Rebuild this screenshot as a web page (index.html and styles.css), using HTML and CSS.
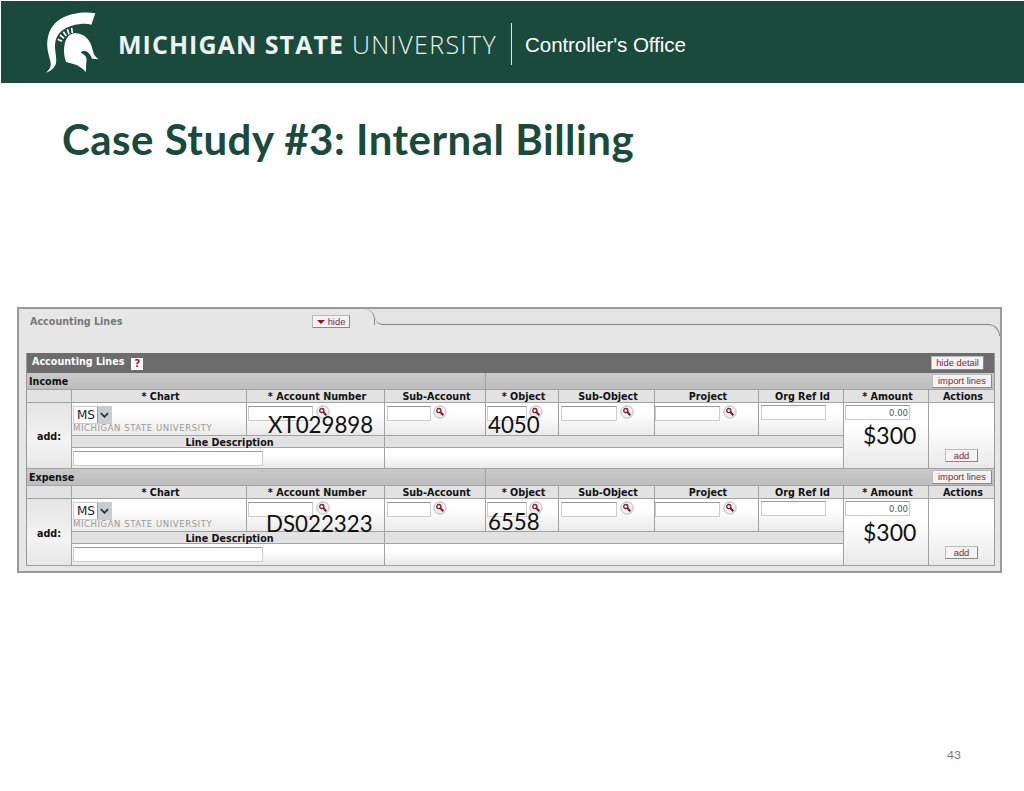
FILE: index.html
```html
<!DOCTYPE html>
<html lang="en">
<head>
<meta charset="utf-8">
<title>Case Study #3: Internal Billing</title>
<link rel="stylesheet" href="styles.css">
</head>
<body>
<svg class="defs" width="0" height="0" aria-hidden="true">
  <symbol id="mag" viewBox="0 0 14 14">
    <circle cx="7" cy="7" r="6.2" fill="#eee" stroke="#bbb" stroke-width="1"/>
    <circle cx="5.8" cy="5.6" r="2.1" fill="#fff" stroke="#7a1c2e" stroke-width="1.3"/>
    <path d="M7.4 7.2 10.4 10.2" stroke="#7a1c2e" stroke-width="2"/>
  </symbol>
</svg>
<div class="page">
  <header class="banner">
    <svg class="spartan" viewBox="45 3 180 246" aria-hidden="true">
      <path fill="#fff" d="M196 40C160 34 112 40 82 64C58 84 50 112 52 142C54 166 64 184 62 198C60 206 54 212 48 218C62 214 74 204 78 190C82 172 72 150 76 126C80 102 100 84 130 76C150 71 170 70 184 74Z"/>
      <path fill="none" stroke="#fff" stroke-width="5" d="M83 118 96 124M90 105 102 115M100 95 109 108M112 88 117 103M125 84 127 99"/>
      <path fill="#fff" d="M132 100C160 98 182 118 188 150C190 162 196 172 206 178L186 176C182 166 176 156 168 154C160 152 154 154 152 158C162 162 170 170 170 178C168 192 168 204 168 216C158 206 146 196 130 192L108 186C102 170 100 150 104 132C108 114 118 102 132 100Z"/>
    </svg>
    <div class="wordmark"><b>MICHIGAN STATE</b> UNIVERSITY</div>
    <div class="sep"></div>
    <div class="office">Controller's Office</div>
  </header>

  <h1 class="title">Case Study #3: Internal Billing</h1>

  <section class="panel">
    <div class="tabstrip">
      <div class="tab">
        <span class="tab-title">Accounting Lines</span>
        <button class="btn btn-hide"><span class="tri"></span>hide</button>
      </div>
      <div class="tab-rest"></div>
    </div>
    <div class="panel-body">
      <div class="panel-corner"></div>
      <div class="table">
        <div class="table-head">
          <span>Accounting Lines</span>
          <span class="help">?</span>
          <button class="btn btn-detail">hide detail</button>
        </div>

        <div class="lines">
          <div class="c group g-left">Income</div>
          <div class="c group g-right"><button class="btn">import lines</button></div>
          <div class="c th"></div>
          <div class="c th">* Chart</div>
          <div class="c th">* Account Number</div>
          <div class="c th">Sub-Account</div>
          <div class="c th">* Object</div>
          <div class="c th">Sub-Object</div>
          <div class="c th">Project</div>
          <div class="c th">Org Ref Id</div>
          <div class="c th">* Amount</div>
          <div class="c th th-end">Actions</div>
          <div class="c add">add:</div>
          <div class="c td chart">
            <div class="sel"><span class="sel-v">MS</span><span class="sel-b"><svg viewBox="0 0 10 6" width="9" height="6"><path d="M1 1 5 5 9 1" fill="none" stroke="#333" stroke-width="2"/></svg></span></div>
            <div class="chart-name">MICHIGAN STATE UNIVERSITY</div>
          </div>
          <div class="c td acct"><input class="in w65"><svg class="mag"><use href="#mag"/></svg><span class="over o-acct1">XT029898</span></div>
          <div class="c td sub"><input class="in w44"><svg class="mag"><use href="#mag"/></svg></div>
          <div class="c td obj"><input class="in w40"><svg class="mag"><use href="#mag"/></svg><span class="over o-obj1">4050</span></div>
          <div class="c td sobj"><input class="in w56"><svg class="mag"><use href="#mag"/></svg></div>
          <div class="c td proj"><input class="in w65"><svg class="mag"><use href="#mag"/></svg></div>
          <div class="c td org"><input class="in w65"></div>
          <div class="c td amt"><input class="in w65 money" value="0.00"><span class="over o-amt1">$300</span></div>
          <div class="c td act"><button class="btn btn-add">add</button></div>
          <div class="c th desc-h">Line Description</div>
          <div class="c th desc-fill"></div>
          <div class="c td desc"><input class="in w190"></div>
          <div class="c td desc-blank"></div>
        </div>

        <div class="lines">
          <div class="c group g-left">Expense</div>
          <div class="c group g-right"><button class="btn">import lines</button></div>
          <div class="c th"></div>
          <div class="c th">* Chart</div>
          <div class="c th">* Account Number</div>
          <div class="c th">Sub-Account</div>
          <div class="c th">* Object</div>
          <div class="c th">Sub-Object</div>
          <div class="c th">Project</div>
          <div class="c th">Org Ref Id</div>
          <div class="c th">* Amount</div>
          <div class="c th th-end">Actions</div>
          <div class="c add">add:</div>
          <div class="c td chart">
            <div class="sel"><span class="sel-v">MS</span><span class="sel-b"><svg viewBox="0 0 10 6" width="9" height="6"><path d="M1 1 5 5 9 1" fill="none" stroke="#333" stroke-width="2"/></svg></span></div>
            <div class="chart-name">MICHIGAN STATE UNIVERSITY</div>
          </div>
          <div class="c td acct"><input class="in w65"><svg class="mag"><use href="#mag"/></svg><span class="over o-acct2">DS022323</span></div>
          <div class="c td sub"><input class="in w44"><svg class="mag"><use href="#mag"/></svg></div>
          <div class="c td obj"><input class="in w40"><svg class="mag"><use href="#mag"/></svg><span class="over o-obj2">6558</span></div>
          <div class="c td sobj"><input class="in w56"><svg class="mag"><use href="#mag"/></svg></div>
          <div class="c td proj"><input class="in w65"><svg class="mag"><use href="#mag"/></svg></div>
          <div class="c td org"><input class="in w65"></div>
          <div class="c td amt"><input class="in w65 money" value="0.00"><span class="over o-amt2">$300</span></div>
          <div class="c td act"><button class="btn btn-add">add</button></div>
          <div class="c th desc-h">Line Description</div>
          <div class="c th desc-fill"></div>
          <div class="c td desc"><input class="in w190"></div>
          <div class="c td desc-blank"></div>
        </div>
      </div>
    </div>
  </section>

  <footer class="pagenum">43</footer>
</div>
</body>
</html>
```
FILE: styles.css
```css
* { box-sizing: border-box; }
html, body { margin: 0; padding: 0; background: #fff; }
.defs { position: absolute; }
.page {
  width: 1024px;
  height: 791px;
  overflow: hidden;
  display: flex;
  flex-direction: column;
}

/* banner */
.banner {
  height: 82px;
  margin: 1px 0 0 1px;
  background: #1a4a3c;
  color: #fff;
  display: flex;
  align-items: center;
  padding-left: 44px;
  flex: none;
}
.spartan { width: 60px; height: 82px; flex: none; }
.wordmark {
  margin-left: 13px;
  font: 300 25px "Open Sans", sans-serif;
  color: #eef2f0;
  white-space: nowrap;
  width: 380px;
  margin-top: 4px;
  letter-spacing: 1.35px;
}
.wordmark b { font-weight: 700; letter-spacing: 1.05px; }
.sep { width: 1px; height: 42px; margin: 4px 13px 0; background: #dfe6e3; flex: none; }
.office {
  font: 400 20.6px "Liberation Sans", sans-serif;
  margin-top: 6px;
  letter-spacing: -0.1px;
  white-space: nowrap;
}

/* title */
.title {
  margin: 33px 0 0 62px;
  font: 700 42px/46px Lato, sans-serif;
  color: #1a4a3c;
  letter-spacing: 0.5px;
  flex: none;
}

/* screenshot panel */
.panel {
  width: 985px;
  height: 266px;
  margin: 145px 0 0 17px;
  border: 2px solid #9a9a9a;
  background: #e4e4e4;
  display: flex;
  flex-direction: column;
  flex: none;
  font-family: "DejaVu Sans", sans-serif;
}
.tabstrip { display: flex; height: 16px; flex: none; }
.tab {
  position: relative;
  z-index: 1;
  width: 356px;
  height: 16px;
  background: #e6e6e6;
  border-top-left-radius: 10px;
  border-top-right-radius: 10px;
  border-right: 1px solid #888;
  display: flex;
  align-items: flex-start;
  padding: 7px 0 0 11px;
}
.tab-title { font-size: 9.6px; font-weight: 700; color: #777; line-height: 12px; width: 282px; flex: none; white-space: nowrap; }
.tab-rest {
  flex: 1;
  height: 16px;
  margin-right: 10px;
  border-bottom: 1px solid #888;
  border-bottom-left-radius: 8px;
}
.panel-body {
  flex: 1;
  position: relative;
  padding: 28px 5px 0 8px;
  background: #e6e6e6;
}
.panel-corner {
  position: absolute;
  right: 0;
  top: -1px;
  width: 12px;
  height: 12px;
  border-top: 1px solid #888;
  border-right: 1px solid #888;
  border-top-right-radius: 12px;
}

/* buttons */
.btn {
  display: inline-flex;
  align-items: center;
  justify-content: center;
  font: 9.4px "Liberation Sans", sans-serif;
  color: #7b2a3a;
  background: #f4f2f2;
  border: 1px solid #bbb;
  border-right-color: #888;
  border-bottom-color: #888;
  padding: 0;
  height: 14px;
  width: 60px;
  line-height: 1;
}
.btn-hide { width: 38px; height: 13px; margin-top: -1px; }
.tri {
  width: 0; height: 0;
  border-left: 4px solid transparent;
  border-right: 4px solid transparent;
  border-top: 4px solid #a01020;
  margin-right: 3px;
}
.btn-detail { width: 53px; margin: 2px 10px 0 auto; }
.btn-add { width: 33px; height: 13px; }

/* table */
.table { width: 967px; box-shadow: -1px 0 0 #999, 1px 0 0 #999; }
.table-head {
  height: 20px;
  background: #6c6c6c;
  color: #fff;
  display: flex;
  align-items: center;
  padding: 0 0 3px 5px;
  font-size: 9.6px;
  font-weight: 700;
}
.help {
  width: 12px; height: 12px;
  margin-left: 7px;
  margin-top: 5px;
  background: #fff;
  color: #a01828;
  font-size: 10px;
  line-height: 12px;
  text-align: center;
}
.lines {
  display: grid;
  grid-template-columns: 45px 175px 138px 101px 73px 96px 104px 85px 85px 65px;
  grid-template-rows: 17px 13px 33px 12px 21px;
  font-size: 9.6px;
  color: #111;
}
.lines:last-child { grid-template-rows: 17px 13px 33px 12px 22px; }
.c { border-right: 1px solid #a2a2a2; border-bottom: 1px solid #a2a2a2; min-width: 0; }
.group {
  background: linear-gradient(#c9c9c9, #bdbdbd);
  font-weight: 700;
  line-height: 18px;
  padding-left: 2px;
}
.g-left { grid-column: 1 / 5; }
.g-right {
  grid-column: 5 / 11;
  border-right: 0;
  display: flex;
  justify-content: flex-end;
  align-items: center;
  padding-right: 2px;
}
.th {
  background: #e2e2e2;
  font-weight: 700;
  text-align: center;
  line-height: 14px;
  padding-left: 3px;
  white-space: nowrap;
}
.th-end { border-right: 0; }
.td {
  background: linear-gradient(#fff 35%, #e9e9e9);
  position: relative;
  display: flex;
  align-items: flex-start;
}
.add {
  grid-row: 3 / 6;
  background: linear-gradient(#e4e4e4, #f4f4f4 60%, #e6e6e6);
  display: flex;
  align-items: center;
  justify-content: center;
  font-weight: 700;
  font-size: 9.6px;
  padding-top: 2px;
}
.chart { display: block; padding: 3px 0 0 1px; }
.sel { display: flex; width: 39px; height: 18px; border: 1px solid #ccc; background: #fff; }
.sel-v { flex: 1; font-size: 12px; line-height: 16px; padding-left: 3px; color: #222; }
.sel-b {
  width: 14px;
  background: #c6cbd8;
  border-left: 1px solid #999;
  display: flex;
  align-items: center;
  justify-content: center;
}
.chart-name {
  font-size: 8.5px;
  line-height: 9px;
  margin-top: 0;
  color: #9a9a9a;
  letter-spacing: 0.57px;
  white-space: nowrap;
}
.in {
  display: block;
  height: 15px;
  padding: 0 1px;
  border: 1px solid #ccc;
  border-top-color: #999;
  background: #fff;
  font: 8.5px "DejaVu Sans", sans-serif;
  color: #555;
  flex: none;
}
.w40 { width: 40px; }
.w44 { width: 44px; }
.w56 { width: 56px; }
.w65 { width: 65px; }
.w190 { width: 190px; }
.money { text-align: right; }
.mag { width: 14px; height: 14px; flex: none; margin: -1px 0 0 3px; }
.acct { padding: 3px 0 0 1px; }
.sub { padding: 3px 0 0 2px; }
.sub .mag { margin-left: 2px; }
.obj { padding: 3px 0 0 1px; }
.obj .mag { margin-left: 2px; }
.sobj { padding: 3px 0 0 2px; }
.proj { padding: 3px 0 0 0; }
.proj .mag { margin-left: 3px; }
.org { padding: 2px 0 0 2px; }
.amt { grid-row: 3 / 6; grid-column: 9; padding: 2px 0 0 1px; }
.act {
  grid-row: 3 / 6;
  grid-column: 10;
  border-right: 0;
  align-items: flex-end;
  justify-content: center;
  padding-bottom: 6px;
}
.desc-h { grid-column: 2 / 4; grid-row: 4; }
.desc-fill { grid-column: 4 / 9; grid-row: 4; }
.desc { grid-column: 2 / 4; grid-row: 5; padding: 3px 0 0 1px; }
.desc-blank { grid-column: 4 / 9; grid-row: 5; }

/* typed annotations laid over the screenshot */
.over {
  position: absolute;
  font: 400 22.3px/28px Lato, sans-serif;
  color: #111;
  white-space: nowrap;
}
.o-acct1 { left: 21px; top: 8px; }
.o-acct2 { left: 19px; top: 11px; }
.o-obj1 { left: 2px; top: 8px; }
.o-obj2 { left: 2px; top: 9px; }
.o-amt1 { left: 19px; top: 18px; font-size: 23px; }
.o-amt2 { left: 19px; top: 19px; font-size: 23px; }

.pagenum {
  margin: auto 0 0 947px;
  padding-bottom: 29px;
  font: 12px/14px Lato, sans-serif;
  color: #777;
}
```
